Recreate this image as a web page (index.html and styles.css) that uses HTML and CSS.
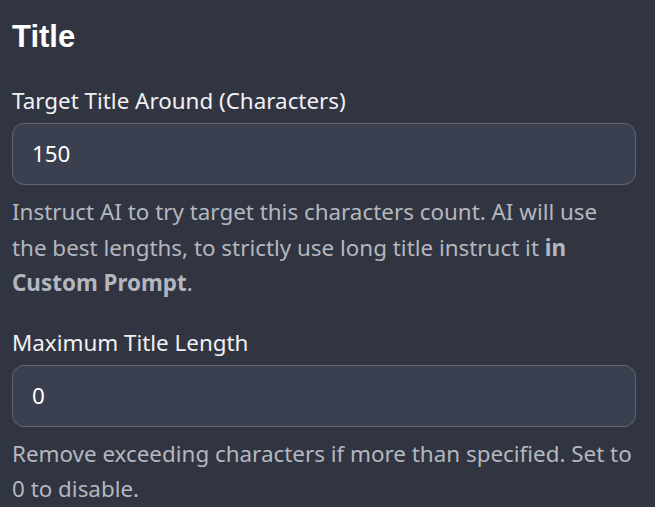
FILE: index.html
```html
<!DOCTYPE html>
<html>
<head>
<meta charset="utf-8">
<link rel="stylesheet" href="styles.css">
</head>
<body>
<div class="panel">
  <h2 class="heading">Title</h2>
  <div class="field">
    <label class="label">Target Title Around (Characters)</label>
    <div class="input">150</div>
    <p class="help">Instruct AI to try target this characters count. AI will use the best lengths, to strictly use long title instruct it <b>in Custom Prompt</b>.</p>
  </div>
  <div class="field">
    <label class="label">Maximum Title Length</label>
    <div class="input">0</div>
    <p class="help">Remove exceeding characters if more than specified. Set to 0 to disable.</p>
  </div>
</div>
</body>
</html>
```
FILE: styles.css
```css
html, body {
  margin: 0;
  padding: 0;
  background: #313541;
}
.panel {
  padding: 15px 19px 0 12px;
  font-family: "Noto Sans", "Open Sans", sans-serif;
  color: #f1f1f3;
}
.heading {
  margin: 0;
  font-family: "Liberation Sans", Arial, sans-serif;
  font-weight: 700;
  font-size: 31px;
  line-height: 44px;
  color: #ffffff;
}
.field {
  margin-top: 24px;
}
.field + .field {
  margin-top: 24px;
}
.label {
  display: block;
  font-size: 22.4px;
  line-height: 36px;
  margin-bottom: 4px;
}
.input {
  box-sizing: border-box;
  height: 62px;
  border: 1px solid #626673;
  border-radius: 12px;
  background: #3b4050;
  padding: 0 19px;
  font-size: 22.4px;
  line-height: 60px;
  color: #ffffff;
}
.help {
  margin: 9px 0 0 0;
  font-size: 22.4px;
  line-height: 35.5px;
  color: #b4b7bf;
}
.help b {
  font-weight: 700;
}
```
